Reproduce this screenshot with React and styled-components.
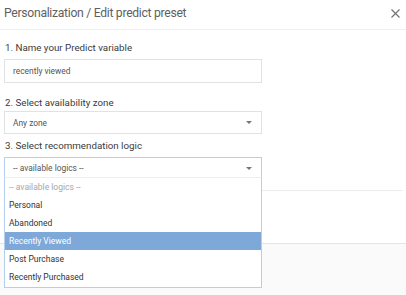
import React from "react";
import styled, { createGlobalStyle } from "styled-components";

const Global = createGlobalStyle`
  html, body { margin: 0; padding: 0; background: #fff; }
  body { font-family: Roboto, "Liberation Sans", sans-serif; }
  * { box-sizing: border-box; }
`;

const Modal = styled.div`
  width: 406px;
  height: 295px;
  display: flex;
  flex-direction: column;
  background: #fff;
  overflow: hidden;
`;

const Header = styled.div`
  height: 30px;
  flex: none;
  display: flex;
  align-items: center;
  justify-content: space-between;
  padding: 0 6px 3px 4px;
  border-bottom: 1px solid #efefef;
`;

const Title = styled.div`
  font-size: 12.2px;
  color: #5f5f5f;
  letter-spacing: -0.3px;
`;

const Close = styled.button`
  border: 0;
  background: none;
  padding: 0;
  width: 9px;
  height: 9px;
  display: flex;
  cursor: pointer;
`;

const Body = styled.div`
  flex: 1;
  padding: 11px 3px 0 5px;
  display: flex;
  flex-direction: column;
`;

const Label = styled.div`
  font-size: 9.75px;
  line-height: 13px;
  color: #3a3a3a;
  margin-bottom: ${(p) => p.$gap}px;
`;

const Field = styled.div`
  width: 258px;
  margin-left: -1px;
  height: ${(p) => p.$h}px;
  border: 1px solid ${(p) => (p.$active ? "#b4d0ee" : "#e2e2e2")};
  display: flex;
  align-items: center;
  justify-content: space-between;
  padding: 0 9px 0 8px;
  font-size: 8.4px;
  color: #555;
  margin-bottom: ${(p) => p.$mb}px;
  background: #fff;
`;

const Caret = styled.span`
  width: 0;
  height: 0;
  border-left: 3px solid transparent;
  border-right: 3px solid transparent;
  border-top: 3.5px solid #777;
`;

const SelectWrap = styled.div`
  position: relative;
  width: 258px;
`;

const List = styled.div`
  position: absolute;
  left: -1px;
  top: 20px;
  width: 258px;
  border: 1px solid #b4d0ee;
  border-top: 1px solid #e6eef7;
  background: #fff;
  z-index: 2;
  padding: 0 0 1px;
`;

const Option = styled.div`
  height: 18px;
  display: flex;
  align-items: center;
  padding-left: 4px;
  font-size: 8.5px;
  color: ${(p) => (p.$placeholder ? "#a8a8a8" : p.$selected ? "#fff" : "#333")};
  background: ${(p) => (p.$selected ? "#7da8d8" : "transparent")};
`;

const Divider = styled.div`
  height: 1px;
  background: #ececec;
  margin: 11px 0 0 -1px;
  width: 399px;
`;

const Footer = styled.div`
  height: 52px;
  flex: none;
  background: #fafafa;
  border-top: 1px solid #e4e4e4;
`;

const options = [
  "-- available logics --",
  "Personal",
  "Abandoned",
  "Recently Viewed",
  "Post Purchase",
  "Recently Purchased",
];

export default function App() {
  return (
    <>
      <Global />
      <Modal>
        <Header>
          <Title>Personalization / Edit predict preset</Title>
          <Close aria-label="close">
            <svg width="9" height="9" viewBox="0 0 9 9">
              <path d="M0.5 0.5 L8.5 8.5 M8.5 0.5 L0.5 8.5" stroke="#707070" strokeWidth="1.1" />
            </svg>
          </Close>
        </Header>
        <Body>
          <Label $gap={5}>1. Name your Predict variable</Label>
          <Field $h={24} $mb={13}>recently viewed</Field>
          <Label $gap={2}>2. Select availability zone</Label>
          <Field $h={23} $mb={5}>
            Any zone
            <Caret />
          </Field>
          <Label $gap={5}>3. Select recommendation logic</Label>
          <SelectWrap>
            <Field $h={22} $mb={0} $active>
              -- available logics --
              <Caret />
            </Field>
            <List>
              {options.map((o, i) => (
                <Option key={o} $placeholder={i === 0} $selected={o === "Recently Viewed"}>
                  {o}
                </Option>
              ))}
            </List>
          </SelectWrap>
          <Divider />
        </Body>
        <Footer />
      </Modal>
    </>
  );
}
